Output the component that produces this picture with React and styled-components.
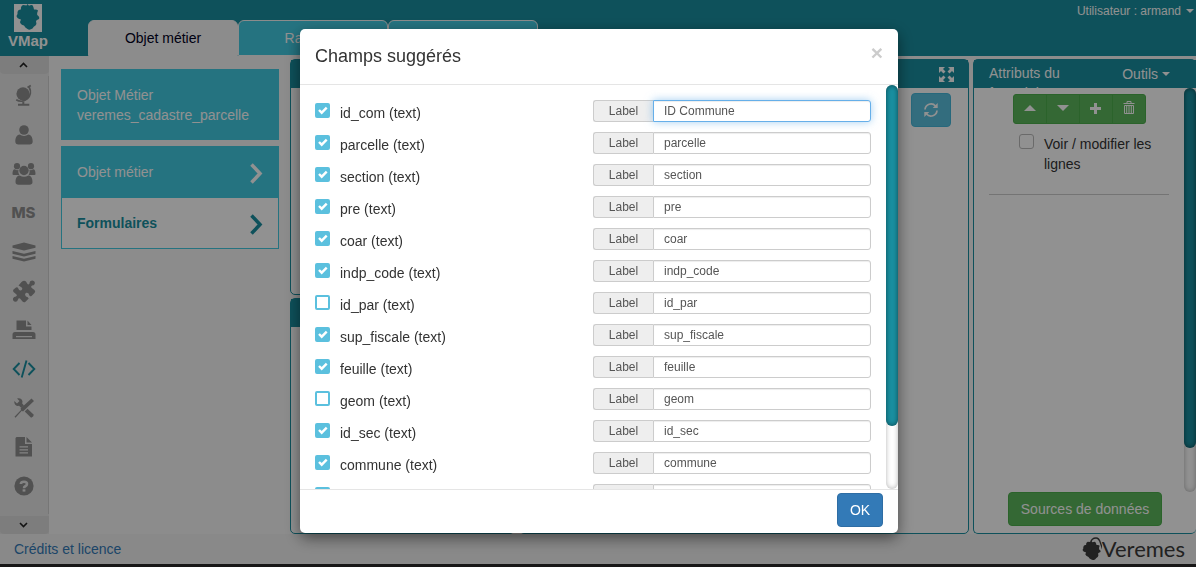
import React from "react";
import styled, { createGlobalStyle, css } from "styled-components";

const teal = "#198fa0";
const lightTeal = "#42cbe2";

const GlobalStyle = createGlobalStyle`
  *, *::before, *::after { box-sizing: border-box; }
  body {
    margin: 0;
    font: 14px/20px "Liberation Sans", Arial, sans-serif;
    color: #333;
    overflow: hidden;
  }
  button, input { font: inherit; }
  svg { display: block; }
`;

const Page = styled.div`
  display: flex;
  flex-direction: column;
  height: 100vh;
  background: #f7f7f7;
`;

/* ---------- top bar ---------- */
const TopBar = styled.header`
  display: flex;
  flex: none;
  height: 56px;
  background: ${teal};
  color: #fff;
`;
const Brand = styled.a`
  display: flex;
  flex-direction: column;
  align-items: center;
  width: 88px;
  padding: 4px 32px 0 0;
  font-weight: bold;
  font-size: 15px;
  line-height: 18px;
  color: #fff;
  text-decoration: none;
`;
const Tabs = styled.nav`
  display: flex;
  flex: 1;
  align-items: flex-end;
`;
const Tab = styled.button`
  width: 150px;
  height: 36px;
  padding: 0;
  border: 1px solid #f7f7f7;
  border-radius: 6px 6px 0 0;
  background: ${lightTeal};
  color: #fff;
  ${(p) =>
    p.$active &&
    css`
      background: #f7f7f7;
      color: #002;
    `}
`;
const UserMenu = styled.button`
  display: flex;
  align-items: center;
  align-self: flex-start;
  gap: 5px;
  height: 22px;
  padding: 0 2px 0 0;
  border: 0;
  background: none;
  color: #fff;
  font-size: 12px;
`;
const Caret = styled.span`
  border: 4px solid transparent;
  border-top-color: currentColor;
  border-bottom: 0;
`;

/* ---------- main area ---------- */
const Main = styled.main`
  display: flex;
  flex: 1;
  min-height: 0;
`;
const Sidebar = styled.aside`
  display: flex;
  flex-direction: column;
  flex: none;
  width: 49px;
  background: #e7e7e7;
`;
const SideScroll = styled.button`
  display: grid;
  place-items: center;
  flex: none;
  height: 18px;
  padding: 0 2px 0 0;
  border: 0;
  border-radius: 0 0 4px 4px;
  background: #dcdcdc;
  color: #222;
`;
const SideList = styled.div`
  display: flex;
  flex-direction: column;
  flex: 1;
  min-height: 0;
  margin: 2px 0;
  overflow: hidden;
  border-right: 1px solid #cfcfcf;
`;
const SideItem = styled.button`
  display: grid;
  place-items: center;
  flex: none;
  height: 39px;
  padding: 1px 1px 0 0;
  border: 0;
  background: none;
  color: ${(p) => (p.$active ? teal : "#8f8f8f")};
  font: 800 15px/20px Inter, "Liberation Sans", sans-serif;
`;

const ObjectPane = styled.section`
  flex: none;
  width: 241px;
  padding: 13px 11px 0 12px;
`;
const ObjectCard = styled.div`
  padding: 16px;
  margin-bottom: 6px;
  height: 71px;
  background: ${lightTeal};
  color: #fff;
`;
const MenuItem = styled.button`
  display: flex;
  align-items: center;
  justify-content: space-between;
  width: 100%;
  height: ${(p) => (p.$active ? "52px" : "51px")};
  padding: 0 15px;
  border: 1px solid ${lightTeal};
  border-top: ${(p) => (p.$active ? "" : "0")};
  background: ${(p) => (p.$active ? lightTeal : "#fff")};
  color: ${(p) => (p.$active ? "#fff" : teal)};
  font-weight: ${(p) => (p.$active ? "normal" : "bold")};
`;

const Workspace = styled.div`
  display: grid;
  flex: 1;
  grid-template-columns: 1fr 2fr;
  gap: 4px;
  margin-right: 4px;
`;
const PanelColumn = styled.div`
  display: flex;
  flex-direction: column;
  gap: 3px;
  padding-top: 3px;
`;
const SideColumn = styled(PanelColumn)`
  flex: 0 0 223px;
`;
const Panel = styled.section`
  display: flex;
  flex-direction: column;
  flex: 1;
  min-height: 0;
  border: 1px solid ${teal};
  border-right-width: ${(p) => (p.$flush ? "0" : "1px")};
  border-radius: 5px;
  background: #fff;
`;
const PanelHead = styled.header`
  display: flex;
  justify-content: space-between;
  flex: none;
  height: 28px;
  padding: 3px ${(p) => (p.$wide ? "26px" : "14px")} 3px 15px;
  overflow: hidden;
  background: ${teal};
  color: #fff;
`;
const PanelTitle = styled.span`
  width: 90px;
`;
const PanelTool = styled.button`
  display: flex;
  align-items: center;
  gap: 4px;
  height: 22px;
  padding: 0;
  border: 0;
  background: none;
  color: #fff;
`;
const PanelBody = styled.div`
  display: flex;
  flex: 1;
  min-height: 0;
  justify-content: flex-end;
`;
const RefreshButton = styled.button`
  display: grid;
  place-items: center;
  width: 40px;
  height: 34px;
  margin: 5px 17px;
  padding: 0;
  border: 1px solid #46b8da;
  border-radius: 4px;
  background: #5bc0de;
  color: #fff;
`;
const AttributeColumn = styled.div`
  display: flex;
  flex-direction: column;
  flex: 1;
  align-items: center;
  padding: 6px 15px 7px;
`;
const ButtonGroup = styled.div`
  display: flex;
  width: 133px;
  height: 30px;
  border: 1px solid #4cae4c;
  border-radius: 3px;
  background: #5cb85c;
`;
const GroupButton = styled.button`
  display: grid;
  place-items: center;
  flex: 1;
  padding: 0 0 2px;
  border: 0;
  background: none;
  color: #fff;
  & + & { border-left: 1px solid #4cae4c; }
`;
const LinesOption = styled.label`
  display: flex;
  align-self: stretch;
  gap: 10px;
  padding: 10px 0 20px 30px;
  border-bottom: 1px solid #ccc;
`;
const PlainCheck = styled.input`
  appearance: none;
  flex: none;
  width: 15px;
  height: 15px;
  margin: 0;
  border: 1px solid #bbb;
  border-radius: 3px;
`;
const SourcesButton = styled.button`
  align-self: flex-end;
  width: 154px;
  height: 34px;
  margin: auto 7px 0 0;
  padding: 0;
  border: 1px solid #4cae4c;
  border-radius: 4px;
  background: #5cb85c;
  color: #fff;
`;

const ScrollTrack = styled.div`
  flex: none;
  width: 12px;
  height: ${(p) => p.$height};
  border-radius: 6px;
  background: #fff;
  box-shadow: inset 0 0 5px rgba(0, 0, 0, 0.3);
`;
const ScrollThumb = styled.div`
  height: ${(p) => p.$size};
  border-radius: 6px;
  background: ${teal};
  box-shadow: inset 0 0 5px rgba(0, 0, 0, 0.5);
`;

const Footer = styled.footer`
  display: flex;
  flex: none;
  align-items: center;
  justify-content: space-between;
  height: 33px;
  padding: 0 11px 0 14px;
  border-bottom: 3px solid #2a2727;
  background: #f1f1f1;
`;
const CreditLink = styled.a`
  color: #337ab7;
  text-decoration: none;
`;
const Veremes = styled.div`
  display: flex;
  align-items: center;
  height: 30px;
  color: #3a3a3a;
  font: 400 22px/30px Lato, sans-serif;
`;

/* ---------- dialog ---------- */
const Backdrop = styled.div`
  position: fixed;
  inset: 0;
  display: flex;
  justify-content: center;
  padding: 29px 0 34px 2px;
  background: rgba(0, 0, 0, 0.43);
`;
const Dialog = styled.div`
  display: flex;
  flex-direction: column;
  width: 598px;
  border-radius: 5px;
  background: #fff;
  box-shadow: 0 5px 15px rgba(0, 0, 0, 0.5);
`;
const DialogHead = styled.header`
  display: flex;
  align-items: flex-start;
  justify-content: space-between;
  flex: none;
  height: 56px;
  padding: 14px 15px;
  border-bottom: 1px solid #e5e5e5;
`;
const DialogTitle = styled.h4`
  margin: 0;
  font-size: 18px;
  line-height: 26px;
  font-weight: normal;
`;
const CloseButton = styled.button`
  padding: 0;
  border: 0;
  background: none;
  color: #ccc;
  font-size: 21px;
  font-weight: bold;
  line-height: 20px;
`;
const DialogBody = styled.div`
  display: flex;
  flex: 1;
  min-height: 0;
`;
const FieldList = styled.div`
  display: flex;
  flex-direction: column;
  flex: 1;
  gap: 10px;
  padding: 15px 15px 0;
  overflow: hidden;
`;
const FieldRow = styled.div`
  display: flex;
  flex: none;
  justify-content: space-between;
  height: 22px;
`;
const FieldCheck = styled.label`
  display: flex;
  gap: 10px;
  padding-top: 3px;
`;
const CheckCell = styled.span`
  display: grid;
  place-items: center;
  width: 15px;
  height: 15px;
  color: #fff;
  & > * { grid-area: 1 / 1; }
  svg { pointer-events: none; }
`;
const Tick = styled.input`
  appearance: none;
  width: 15px;
  height: 15px;
  margin: 0;
  border: 2px solid #5bc0de;
  border-radius: 2px;
  background: #fff;
  &:checked { background: #5bc0de; }
`;
const InputGroup = styled.label`
  display: flex;
  width: 278px;
  color: #555;
  font-size: 12px;
`;
const Addon = styled.span`
  width: 60px;
  border: 1px solid #ccc;
  border-right: 0;
  border-radius: 3px 0 0 3px;
  background: #eee;
  text-align: center;
`;
const TextInput = styled.input`
  flex: 1;
  min-width: 0;
  padding: 0 10px;
  border: 1px solid ${(p) => (p.$active ? "#66afe9" : "#ccc")};
  border-radius: 0 3px 3px 0;
  background: #fff;
  color: #555;
  outline: 0;
  box-shadow: inset 0 1px 1px rgba(0, 0, 0, 0.075)
    ${(p) => (p.$active ? ", 0 0 8px rgba(102, 175, 233, 0.6)" : "")};
`;
const DialogFoot = styled.footer`
  display: flex;
  flex: none;
  justify-content: flex-end;
  height: 44px;
  padding: 3px 15px;
  border-top: 1px solid #e5e5e5;
`;
const OkButton = styled.button`
  width: 46px;
  height: 34px;
  padding: 0;
  border: 1px solid #2e6da4;
  border-radius: 4px;
  background: #337ab7;
  color: #fff;
`;

/* ---------- drawings ---------- */
const leaf =
  "M12.5 1.5 13.5 0 15 1.8Q17 .5 18.5 1.2 20 3.5 20 5.5 23 5 24 6.5 22.8 9 23.2 11 26 13 25 15 22.5 16 22 17 23 20 21.5 21.5 19.5 22.5 18.5 24.5 15.5 26.5 13.5 25 11 23.5 10 21.5 6.5 20.5 6 18L7 15.5Q3 14.5 2.5 12 4 10 3.5 8 4 5 7 5.5 6.5 2 9 1 11 1 12.5 1.5Z";

const BrandLogo = () => (
  <svg width="28" height="28" viewBox="0 0 28 28">
    <path fill="#fff" d="M0 0h28v28H0z" />
    <path fill={teal} d={leaf} />
  </svg>
);

const VeremesLeaf = () => (
  <svg width="20" height="26" viewBox="0 0 20 26">
    <g transform="translate(-1.500 5) scale(.8 .74)">
      <path fill="currentColor" d={leaf} />
    </g>
    <path fill="none" stroke="currentColor" strokeWidth="1.300" d="M8.500 7Q9.500 2 14 2 17 2 18.500 7L20.500 13" />
  </svg>
);

const Svg = ({ size = 24, children, ...rest }) => (
  <svg width={size} height={size} viewBox="0 0 24 24" fill="currentColor" {...rest}>
    {children}
  </svg>
);

const Line = (props) => <path fill="none" stroke="currentColor" {...props} />;

const icons = {
  globe: (
    <Svg>
      <circle cx="11" cy="9.800" r="6.600" />
      <Line strokeWidth="1.800" d="M15.500 3.500 18.800 1.500M17.300 3.500A9.300 9.300 0 0 1 4.200 15.800" />
      <path d="M10.300 17.500h2v2.300h5v1.900H6v-1.900h4.300z" />
    </Svg>
  ),
  user: (
    <Svg>
      <circle cx="12" cy="7" r="4.800" />
      <path d="M3.300 18.500c0-4 1.700-7 4.500-7 1.200.9 2.500 1.400 4.200 1.400s3-.5 4.200-1.400c2.800 0 4.500 3 4.500 7 0 2-1.200 3-3 3H6.300c-1.800 0-3-1-3-3z" />
    </Svg>
  ),
  users: (
    <Svg>
      <circle cx="5" cy="4.200" r="3.100" />
      <circle cx="19" cy="4.200" r="3.100" />
      <circle cx="12" cy="8.500" r="4.700" />
      <path d="M.5 12c0-3 .8-4.700 2.300-4.700C4 8.200 5.300 8.300 6.500 8 6 10 6.700 12 7.500 13H2C1 13 .5 12.700.5 12zM23.500 12c0-3-.8-4.700-2.300-4.700-1.200.9-2.500 1-3.700.7.500 2-.2 4-1 5H22c1 0 1.500-.3 1.500-1z" />
      <path d="M3.500 20c0-4 1.600-6.500 4.200-6.500 2.800 1.700 5.800 1.700 8.600 0 2.600 0 4.200 2.500 4.200 6.500 0 1.900-1.100 2.700-2.800 2.700H6.300c-1.700 0-2.800-.8-2.800-2.700z" />
    </Svg>
  ),
  layers: (
    <Svg>
      <path d="M12 2.500 23.500 5.500v2.300L12 10.600.5 7.800V5.500zM.5 11 12 13.800 23.500 11v2.700L12 16.500.5 13.700zM.5 16 12 18.800 23.500 16v2.700L12 21.500.5 18.700z" />
    </Svg>
  ),
  puzzle: (
    <Svg>
      <path d="M6.500 6.500 9.500 3Q12 .8 14 2.500L15.500 5Q16.500 6 17.500 4.500 17.500 1.500 20.500 1.500 23.500 2 22.700 5 22 6.500 20 6.500 18.500 7.500 19.500 8.700L22.500 11Q24 12.500 22.500 14L19.500 17Q18 18 17.300 16.300 17 13.300 14.300 13.800 12 15 14 17.500 16.300 18 16.700 19.500L13.500 22.700Q12 24 10.500 22.500L8 19.500Q6.500 18.500 6 20.500 5.500 23 3 22.700.5 22 1 19.500 1.600 17.700 4 17.500 5.500 16.500 4.500 15.500L1.500 13Q.5 11.500 1.500 10.500L4 8.500Q5.500 7.500 6.300 9.500 7 12 9.300 11.300 11.500 9.500 9 8Z" />
    </Svg>
  ),
  printer: (
    <Svg>
      <path d="M4.500 2.500H14v6h5.500V12h-15zM15.500 2.500l4 4.500h-4z" />
      <path fillRule="evenodd" d="M3 14h18q2.500 0 2.500 2.500V21H.5v-4.500Q.5 14 3 14zm1 4v1.200h16V18z" />
    </Svg>
  ),
  code: (
    <Svg>
      <Line strokeWidth="1.900" d="M7.500 6 1.700 12 7.500 18M16.500 6 22.300 12 16.500 18M14.500 3.500 9.700 20.500" />
    </Svg>
  ),
  tools: (
    <Svg>
      <path d="M19.500 2.500 22 5 11 15.500 9.800 14.800 3.500 21.700 2.500 20.700 9 14l-.5-1.500z" />
      <path d="M5 2.500q4.500-1 5.500 3l-.3 2L12 9.500l-2.700 2.500L7 9.800Q3 10.500 2.300 6.500V5L5 7.500 7.500 5zM15.500 12.800l6.300 6q0 2.200-2.700 2.900L12.700 15.500z" />
    </Svg>
  ),
  document: (
    <Svg>
      <path fillRule="evenodd" d="M4.500 2H13v7h7v12.500H3.500V3zM7.500 11.200v1.300h8.500v-1.300zm0 3v1.300h8.500v-1.300zm0 3v1.300h8.500v-1.300z" />
      <path d="M14.500 2 20 7.500h-5.500z" />
    </Svg>
  ),
  help: (
    <Svg>
      <circle cx="12" cy="12" r="9.600" />
      <path fill="none" stroke="#e7e7e7" strokeWidth="2.600" d="M8.800 10Q9 7.800 12 7.800T15 10Q15 11.400 13.300 12.200 12 12.800 12 14.200" />
      <path fill="#e7e7e7" d="M10.600 15.300h2.800v2.300h-2.800z" />
    </Svg>
  ),
};

const Chevron = () => (
  <svg width="14" height="24" viewBox="0 0 14 24">
    <Line strokeWidth="3.500" d="M2.500 4.500 11 13.500 2.500 22.500" />
  </svg>
);
const SmallChevron = ({ d }) => (
  <svg width="9" height="6" viewBox="0 0 9 6">
    <Line strokeWidth="1.600" d={d} />
  </svg>
);
const ExpandIcon = () => (
  <svg width="15" height="15" viewBox="0 0 15 15" fill="currentColor">
    <path d="M0 0h6L4 2l2.500 2.500-2 2L2 4 0 6zM15 0v6l-2-2-2.500 2.500-2-2L11 2 9 0zM0 15V9l2 2 2.500-2.500 2 2L4 13l2 2zM15 15H9l2-2-2.500-2.500 2-2L13 11l2-2z" />
  </svg>
);
const RefreshIcon = () => (
  <svg width="14" height="14" viewBox="0 0 14 14" fill="currentColor">
    <Line strokeWidth="1.700" d="M1 6.500A6 6 0 0 1 11.500 3M13 7.500A6 6 0 0 1 2.500 11" />
    <path d="M13.700 0v5H8.700zM.3 14V9h5z" />
  </svg>
);
const TrashIcon = () => (
  <svg width="12" height="14" viewBox="0 0 12 14">
    <Line d="M.5 2.500h11M4 2V.5h4V2M1.500 4.500h9v8h-9zM3.700 5v7M6 5v7M8.300 5v7" />
  </svg>
);
const Triangle = ({ d }) => (
  <svg width="12" height="6" viewBox="0 0 12 6" fill="currentColor">
    <path d={d} />
  </svg>
);
const PlusIcon = () => (
  <svg width="11" height="11" viewBox="0 0 11 11">
    <Line strokeWidth="3" d="M5.500 0v11M0 5.500h11" />
  </svg>
);
const CheckMark = () => (
  <svg width="11" height="9" viewBox="0 0 11 9">
    <Line strokeWidth="2.400" d="M2 4 4.700 6.700 9.700 1.700" />
  </svg>
);

const sideItems = [
  ["Globe", icons.globe],
  ["Utilisateur", icons.user],
  ["Groupes", icons.users],
  ["MS", "MS"],
  ["Couches", icons.layers],
  ["Modules", icons.puzzle],
  ["Impression", icons.printer],
  ["Code", icons.code],
  ["Outils", icons.tools],
  ["Document", icons.document],
  ["Aide", icons.help],
];

const fields = [
  ["id_com", true, "ID Commune"],
  ["parcelle", true],
  ["section", true],
  ["pre", true],
  ["coar", true],
  ["indp_code", true],
  ["id_par", false],
  ["sup_fiscale", true],
  ["feuille", true],
  ["geom", false],
  ["id_sec", true],
  ["commune", true],
  ["", true],
];

function Field({ name, checked, label, active }) {
  return (
    <FieldRow>
      <FieldCheck>
        <CheckCell>
          <Tick type="checkbox" defaultChecked={checked} />
          {checked && <CheckMark />}
        </CheckCell>
        {name && `${name} (text)`}
      </FieldCheck>
      <InputGroup>
        <Addon>Label</Addon>
        <TextInput type="text" defaultValue={label} $active={active} />
      </InputGroup>
    </FieldRow>
  );
}

export default function App() {
  return (
    <>
      <GlobalStyle />
      <Page>
        <TopBar>
          <Brand href="#">
            <BrandLogo />
            VMap
          </Brand>
          <Tabs>
            <Tab $active>Objet métier</Tab>
            <Tab>Rapports</Tab>
            <Tab />
          </Tabs>
          <UserMenu>
            Utilisateur : armand
            <Caret />
          </UserMenu>
        </TopBar>

        <Main>
          <Sidebar>
            <SideScroll aria-label="Monter">
              <SmallChevron d="M1 5 4.500 1.500 8 5" />
            </SideScroll>
            <SideList>
              {sideItems.map(([name, icon]) => (
                <SideItem key={name} aria-label={name} $active={name === "Code"}>
                  {icon}
                </SideItem>
              ))}
            </SideList>
            <SideScroll aria-label="Descendre">
              <SmallChevron d="M1 1 4.500 4.500 8 1" />
            </SideScroll>
          </Sidebar>

          <ObjectPane>
            <ObjectCard>
              Objet Métier
              <br />
              veremes_cadastre_parcelle
            </ObjectCard>
            <MenuItem $active>
              Objet métier
              <Chevron />
            </MenuItem>
            <MenuItem>
              Formulaires
              <Chevron />
            </MenuItem>
          </ObjectPane>

          <Workspace>
            <PanelColumn>
              <Panel>
                <PanelHead />
              </Panel>
              <Panel>
                <PanelHead />
              </Panel>
            </PanelColumn>
            <PanelColumn>
              <Panel>
                <PanelHead>
                  <span />
                  <PanelTool aria-label="Agrandir">
                    <ExpandIcon />
                  </PanelTool>
                </PanelHead>
                <PanelBody>
                  <RefreshButton aria-label="Actualiser">
                    <RefreshIcon />
                  </RefreshButton>
                </PanelBody>
              </Panel>
            </PanelColumn>
          </Workspace>

          <SideColumn>
            <Panel $flush>
              <PanelHead $wide>
                <PanelTitle>Attributs du formulaire</PanelTitle>
                <PanelTool>
                  Outils
                  <Caret />
                </PanelTool>
              </PanelHead>
              <PanelBody>
                <AttributeColumn>
                  <ButtonGroup>
                    <GroupButton aria-label="Monter">
                      <Triangle d="M6 0l6 6H0z" />
                    </GroupButton>
                    <GroupButton aria-label="Descendre">
                      <Triangle d="M0 0h12L6 6z" />
                    </GroupButton>
                    <GroupButton aria-label="Ajouter">
                      <PlusIcon />
                    </GroupButton>
                    <GroupButton aria-label="Supprimer">
                      <TrashIcon />
                    </GroupButton>
                  </ButtonGroup>
                  <LinesOption>
                    <PlainCheck type="checkbox" />
                    Voir / modifier les lignes
                  </LinesOption>
                  <SourcesButton>Sources de données</SourcesButton>
                </AttributeColumn>
                <ScrollTrack $height="calc(100% - 41px)">
                  <ScrollThumb $size="89%" />
                </ScrollTrack>
              </PanelBody>
            </Panel>
          </SideColumn>
        </Main>

        <Footer>
          <CreditLink href="#">Crédits et licence</CreditLink>
          <Veremes>
            <VeremesLeaf />
            Veremes
          </Veremes>
        </Footer>
      </Page>

      <Backdrop>
        <Dialog role="dialog" aria-labelledby="dialog-title">
          <DialogHead>
            <DialogTitle id="dialog-title">Champs suggérés</DialogTitle>
            <CloseButton aria-label="Fermer">×</CloseButton>
          </DialogHead>
          <DialogBody>
            <FieldList>
              {fields.map(([name, checked, label = name], i) => (
                <Field key={i} name={name} checked={checked} label={label} active={i === 0} />
              ))}
            </FieldList>
            <ScrollTrack $height="100%">
              <ScrollThumb $size="84.4%" />
            </ScrollTrack>
          </DialogBody>
          <DialogFoot>
            <OkButton>OK</OkButton>
          </DialogFoot>
        </Dialog>
      </Backdrop>
    </>
  );
}
